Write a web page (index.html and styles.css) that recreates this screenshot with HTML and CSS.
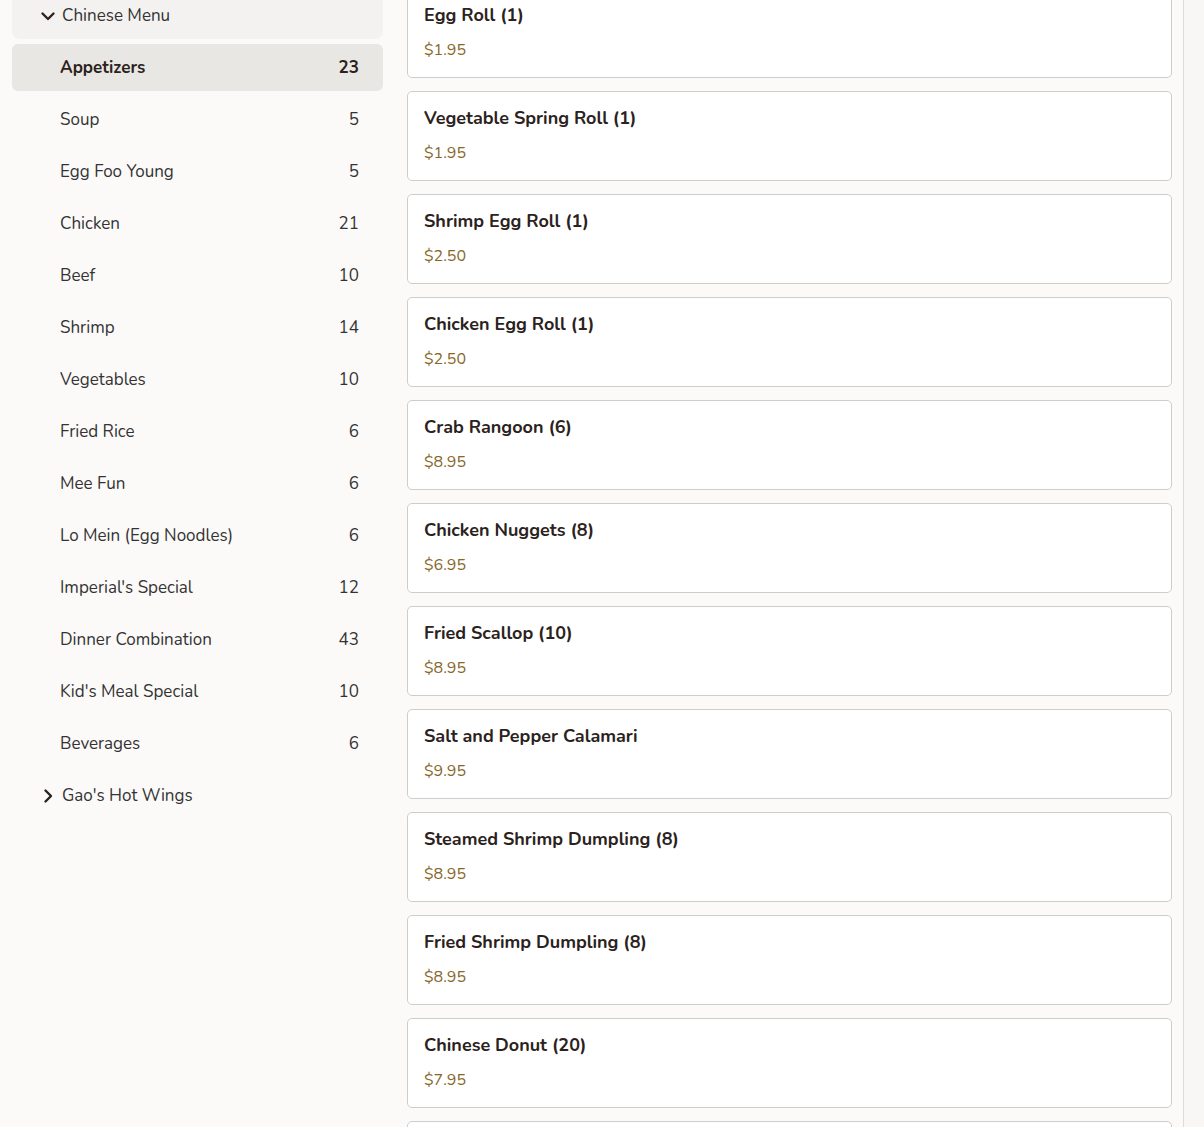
FILE: index.html
```html
<!DOCTYPE html>
<html lang="en">
<head>
    <meta charset="UTF-8">
    <meta name="viewport" content="width=device-width, initial-scale=1.0">
    <title>Menu</title>
    <link rel="stylesheet" href="styles.css">
</head>
<body>
    <div class="page">
        <aside class="sidebar">
            <div class="group-head open">
                <svg class="chev" viewBox="0 0 16 16" width="16" height="16"><path d="M2.5 5.5 8 11l5.5-5.5" fill="none" stroke="#2b2220" stroke-width="2.4" stroke-linecap="round" stroke-linejoin="round"/></svg>
                <span>Chinese Menu</span>
            </div>
            <ul class="cats">
                <li class="cat active"><span>Appetizers</span><span>23</span></li>
                <li class="cat"><span>Soup</span><span>5</span></li>
                <li class="cat"><span>Egg Foo Young</span><span>5</span></li>
                <li class="cat"><span>Chicken</span><span>21</span></li>
                <li class="cat"><span>Beef</span><span>10</span></li>
                <li class="cat"><span>Shrimp</span><span>14</span></li>
                <li class="cat"><span>Vegetables</span><span>10</span></li>
                <li class="cat"><span>Fried Rice</span><span>6</span></li>
                <li class="cat"><span>Mee Fun</span><span>6</span></li>
                <li class="cat"><span>Lo Mein (Egg Noodles)</span><span>6</span></li>
                <li class="cat"><span>Imperial's Special</span><span>12</span></li>
                <li class="cat"><span>Dinner Combination</span><span>43</span></li>
                <li class="cat"><span>Kid's Meal Special</span><span>10</span></li>
                <li class="cat"><span>Beverages</span><span>6</span></li>
            </ul>
            <div class="group-head">
                <svg class="chev" viewBox="0 0 16 16" width="16" height="16"><path d="M5.5 2.5 11 8l-5.5 5.5" fill="none" stroke="#2b2220" stroke-width="2.4" stroke-linecap="round" stroke-linejoin="round"/></svg>
                <span>Gao's Hot Wings</span>
            </div>
        </aside>

        <main class="items">
            <div class="item"><h3>Egg Roll (1)</h3><p>$1.95</p></div>
            <div class="item"><h3>Vegetable Spring Roll (1)</h3><p>$1.95</p></div>
            <div class="item"><h3>Shrimp Egg Roll (1)</h3><p>$2.50</p></div>
            <div class="item"><h3>Chicken Egg Roll (1)</h3><p>$2.50</p></div>
            <div class="item"><h3>Crab Rangoon (6)</h3><p>$8.95</p></div>
            <div class="item"><h3>Chicken Nuggets (8)</h3><p>$6.95</p></div>
            <div class="item"><h3>Fried Scallop (10)</h3><p>$8.95</p></div>
            <div class="item"><h3>Salt and Pepper Calamari</h3><p>$9.95</p></div>
            <div class="item"><h3>Steamed Shrimp Dumpling (8)</h3><p>$8.95</p></div>
            <div class="item"><h3>Fried Shrimp Dumpling (8)</h3><p>$8.95</p></div>
            <div class="item"><h3>Chinese Donut (20)</h3><p>$7.95</p></div>
            <div class="item"></div>
        </main>
    </div>
</body>
</html>
```

FILE: styles.css
```css
body {
    margin: 0;
    background-color: #f8f7f5;
    font-family: 'Nunito', 'Lato', sans-serif;
    color: #2b2220;
    overflow: hidden;
}

.page {
    display: flex;
    align-items: flex-start;
    width: 1183px;
    height: 1127px;
    background-color: #fbfaf9;
    border-right: 1px solid #dedcd9;
    overflow: hidden;
}

.sidebar {
    width: 371px;
    margin-left: 12px;
    margin-top: -8px;
    flex-shrink: 0;
}

.group-head {
    display: flex;
    align-items: center;
    gap: 6px;
    height: 47px;
    padding-left: 28px;
    font-size: 17px;
    color: #333;
}

.group-head.open {
    background-color: #f3f2f0;
    border-radius: 0 0 8px 8px;
    margin-bottom: 5px;
}

.chev {
    flex-shrink: 0;
}

.cats {
    list-style: none;
    margin: 0;
    padding: 0;
}

.cat {
    display: flex;
    justify-content: space-between;
    align-items: center;
    height: 47px;
    margin-bottom: 5px;
    padding: 0 24px 0 48px;
    font-size: 17px;
    color: #333;
    border-radius: 6px;
}

.cat.active {
    background-color: #e8e7e4;
    font-weight: bold;
    color: #2b2220;
}

.items {
    width: 765px;
    margin-left: 24px;
    margin-top: -12px;
    display: flex;
    flex-direction: column;
    gap: 13px;
}

.item {
    box-sizing: border-box;
    height: 90px;
    flex-shrink: 0;
    padding: 14px 16px 0;
    background-color: #fff;
    border: 1px solid #cfcdca;
    border-radius: 5px;
}

.item h3 {
    margin: 0;
    font-size: 18px;
    font-weight: bold;
    line-height: 24px;
    color: #2b2220;
}

.item p {
    margin: 12px 0 0;
    font-size: 16px;
    line-height: 22px;
    color: #86672a;
}
```
